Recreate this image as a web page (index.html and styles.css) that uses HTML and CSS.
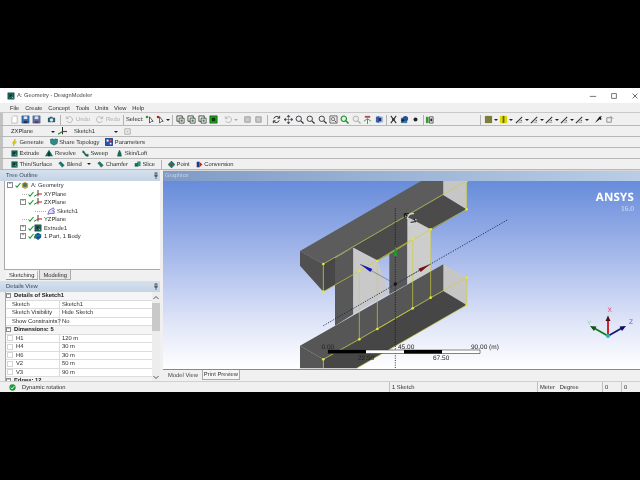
FILE: index.html
```html
<!DOCTYPE html>
<html lang="en">
<head>
<meta charset="utf-8">
<title>A: Geometry - DesignModeler</title>
<link rel="stylesheet" href="styles.css">
</head>
<body>
<svg class="defs" width="0" height="0" aria-hidden="true">
  <symbol id="doc" viewBox="0 0 10 10"><path d="M2 9V3l2-2h4v8z" fill="#fff" stroke="#bbb"/></symbol>
  <symbol id="save" viewBox="0 0 10 10"><path d="M1 1h8v8H1z" fill="#3b6db0" stroke="#244a80" stroke-width=".6"/><path d="M3 1.500h4v3H3z" fill="#dfe8f5"/><path d="M3 6.500h4V9H3z" fill="#23324a"/></symbol>
  <symbol id="saveas" viewBox="0 0 10 10"><path d="M1 1h8v8H1z" fill="#5a77a8" stroke="#3c527a" stroke-width=".6"/><path d="M3 1.500h4v3H3z" fill="#d8dee8"/><path d="M3 6.500h4V9H3z" fill="#7d2f5c"/></symbol>
  <symbol id="cam" viewBox="0 0 10 10"><path d="M1 3h8v5H1z" fill="#27586e"/><circle cx="5" cy="5.500" r="2" fill="#cfe9ee"/><path d="M3 2h3v1H3z" fill="#222"/></symbol>
  <symbol id="undo" viewBox="0 0 10 10"><path d="M2.500 3a3.300 3.300 0 1 1-.5 3.500M1.500 1.500V4H4" fill="none" stroke="#b4b4b4" stroke-width="1"/></symbol>
  <symbol id="redo" viewBox="0 0 10 10"><path d="M7.500 3a3.300 3.300 0 1 0 .5 3.500M8.500 1.500V4H6" fill="none" stroke="#b4b4b4" stroke-width="1"/></symbol>
  <symbol id="sel1" viewBox="0 0 10 10"><path d="M5 2v7l2-2 2 0z" fill="#fff" stroke="#222" stroke-width=".8"/><path d="M1 1h2.500v2.500H1z" fill="#3a8a3a"/></symbol>
  <symbol id="sel2" viewBox="0 0 10 10"><path d="M4 2v7l2-2 2 0z" fill="#fff" stroke="#222" stroke-width=".8"/><path d="M1 1h2.500v2.500H1z" fill="#b02020"/></symbol>
  <symbol id="fa" viewBox="0 0 10 10"><path d="M1 1h6v6H1z" fill="#e6efe6" stroke="#222" stroke-width=".8"/><path d="M3.500 3.500H9V9H3.500z" fill="#fff" stroke="#222" stroke-width=".8"/><path d="M5 5h2.500v2.500H5z" fill="#3b8a3b"/></symbol>
  <symbol id="fg" viewBox="0 0 10 10"><path d="M1 1h8v8H1z" fill="#23a523" stroke="#0e500e" stroke-width=".8"/><path d="M3 3h4v4H3z" fill="#0b3a0b"/></symbol>
  <symbol id="gr" viewBox="0 0 10 10"><path d="M2 2h6v6H2z" fill="#c9c9c9" stroke="#9a9a9a"/></symbol>
  <symbol id="rot" viewBox="0 0 10 10"><path d="M2 4a3.400 3.400 0 0 1 6-1M8 6a3.400 3.400 0 0 1-6 1M8.500 1v2.500H6M1.500 9V6.500H4" fill="none" stroke="#222" stroke-width="1"/></symbol>
  <symbol id="pan" viewBox="0 0 10 10"><path d="M5 0l1.500 2h-3zM5 10L3.500 8h3zM0 5l2-1.500v3zM10 5L8 3.500v3zM5 2v6M2 5h6" fill="#333" stroke="#333" stroke-width=".5"/></symbol>
  <symbol id="zoom" viewBox="0 0 10 10"><circle cx="4.200" cy="4.200" r="3" fill="#e6eef6" stroke="#333"/><path d="M6.500 6.500L9.500 9.500" stroke="#333" stroke-width="1.400"/></symbol>
  <symbol id="zoomg" viewBox="0 0 10 10"><circle cx="4.200" cy="4.200" r="3" fill="#d8f0d8" stroke="#1d8a2d" stroke-width="1.200"/><path d="M6.500 6.500L9.500 9.500" stroke="#1d8a2d" stroke-width="1.600"/></symbol>
  <symbol id="zoomf" viewBox="0 0 10 10"><circle cx="4.200" cy="4.200" r="3" fill="#eee" stroke="#aaa"/><path d="M6.500 6.500L9.500 9.500" stroke="#aaa" stroke-width="1.400"/></symbol>
  <symbol id="zbox" viewBox="0 0 10 10"><path d="M1 1h8v8H1z" fill="#e8e8e8" stroke="#444" stroke-width=".8"/><circle cx="4.500" cy="4.500" r="1.800" fill="none" stroke="#444" stroke-width=".7"/><path d="M6 6l2 2" stroke="#444"/></symbol>
  <symbol id="iso" viewBox="0 0 10 10"><path d="M5 4v6M1 7l4-3 4 3" fill="none" stroke="#2a9a50" stroke-width="1"/><path d="M2 1h6v2H2z" fill="#b04a4a"/></symbol>
  <symbol id="views" viewBox="0 0 10 10"><path d="M1 2l4-1v8l-4-1z" fill="#3a5fa8"/><path d="M5 1l4 1v6l-4 1z" fill="#a9bbd8"/><path d="M4 3h3v4H4z" fill="#1d2f66"/></symbol>
  <symbol id="scis" viewBox="0 0 10 10"><path d="M2 1l6 8M8 1L2 9" stroke="#333" stroke-width="1.200"/><circle cx="5" cy="5" r="1.500" fill="#333"/></symbol>
  <symbol id="shade" viewBox="0 0 10 10"><path d="M1 3h7v6H1z" fill="#3d7f9f"/><circle cx="6" cy="4" r="3" fill="#2b4f9a"/><circle cx="3" cy="6" r="1.500" fill="#222"/></symbol>
  <symbol id="dot" viewBox="0 0 10 10"><circle cx="5" cy="5" r="2.200" fill="#222"/></symbol>
  <symbol id="lay" viewBox="0 0 10 10"><path d="M1 2h3v7H1z" fill="#3a9a3a"/><path d="M5 2h4v7H5z" fill="#eee" stroke="#222" stroke-width=".7"/><path d="M6 4h2v3H6z" fill="#222"/></symbol>
  <symbol id="ol" viewBox="0 0 10 10"><path d="M1 1h8v8H1z" fill="#7b7d3c"/></symbol>
  <symbol id="yl" viewBox="0 0 10 10"><path d="M1 1h8v8H1z" fill="#dcd80a"/><path d="M4 1h2v8H4z" fill="#6a6a10"/></symbol>
  <symbol id="ln" viewBox="0 0 10 10"><path d="M1 9L8 2" stroke="#333" stroke-width="1.200"/><path d="M4 8h4" stroke="#8a8a8a"/><circle cx="7" cy="6" r=".8" fill="#555"/></symbol>
  <symbol id="pin" viewBox="0 0 10 10"><path d="M1 9l5-4 3-4-3 1-3 4z" fill="#111"/><path d="M6 3l2 2" stroke="#111" stroke-width="1.500"/></symbol>
  <symbol id="sq" viewBox="0 0 10 10"><path d="M2 3h5v5H2z" fill="none" stroke="#888"/><path d="M6 1l3 3" stroke="#888"/></symbol>
  <symbol id="axes" viewBox="0 0 10 10"><path d="M5 0v8" stroke="#222" stroke-width="1.100"/><path d="M5 5h5" stroke="#d01818" stroke-width="1.300"/><path d="M5 5L0 8" stroke="#1e8a2a" stroke-width="1.200"/></symbol>
  <symbol id="skg" viewBox="0 0 10 10"><path d="M2 2h6v6H2z" fill="none" stroke="#aaa"/><path d="M4 4h2v2H4z" fill="#bbb"/></symbol>
  <symbol id="bolt" viewBox="0 0 10 10"><path d="M6 0L2 6h2.500L3 10l5-6H5.500z" fill="#f0d000" stroke="#7a6a00" stroke-width=".4"/></symbol>
  <symbol id="share" viewBox="0 0 10 10"><path d="M0 2l3-1 2 1 2-1 3 1-1 5-4 2-4-2z" fill="#2b8a8a" stroke="#12494f" stroke-width=".5"/></symbol>
  <symbol id="param" viewBox="0 0 10 10"><path d="M.5.500h9v9h-9z" fill="#2750b0" stroke="#15306e"/><path d="M2 2h2.500v2.500H2z" fill="#fff"/><path d="M6 6h2v2H6z" fill="#fff"/><path d="M6 2h2v2H6z" fill="#e05050"/></symbol>
  <symbol id="ext" viewBox="0 0 10 10"><path d="M1 1h8v8H1z" fill="#136a5a" stroke="#0a3c34" stroke-width=".6"/><path d="M3 3h3v3H3z" fill="#2a2a2a"/><path d="M6 6l2 2" stroke="#9adfd0"/></symbol>
  <symbol id="rev" viewBox="0 0 10 10"><path d="M0 9l3-5 2-3 2 3 3 5z" fill="#136a5a"/><path d="M4 4h2v5H4z" fill="#0a3030"/></symbol>
  <symbol id="swp" viewBox="0 0 10 10"><path d="M1 1c4 0 2 6 8 5v3C3 10 4 4 1 4z" fill="#136a5a" stroke="#0a3c34" stroke-width=".4"/></symbol>
  <symbol id="skin" viewBox="0 0 10 10"><path d="M5 0l2 4 1 5H2l1-5z" fill="#136a5a" stroke="#0a3c34" stroke-width=".4"/></symbol>
  <symbol id="bln" viewBox="0 0 10 10"><path d="M1 3l3-2 5 5-3 3z" fill="#1a7a70" stroke="#0a3c34" stroke-width=".5"/></symbol>
  <symbol id="slc" viewBox="0 0 10 10"><path d="M1 3h5v5H1z" fill="#136a5a"/><path d="M5 1h4v6H5z" fill="#2a9a88" stroke="#0a3c34" stroke-width=".4"/></symbol>
  <symbol id="pt" viewBox="0 0 10 10"><path d="M5 0l5 5-5 5-5-5z" fill="#1a7a70" stroke="#0a3c34" stroke-width=".5"/><circle cx="5" cy="5" r="1.400" fill="#c22"/></symbol>
  <symbol id="cnv" viewBox="0 0 10 10"><path d="M1 1h4v8H1z" fill="#22368e"/><path d="M5 1l4 4-4 4z" fill="#c81e1e"/></symbol>
  <symbol id="geo" viewBox="0 0 10 10"><path d="M1 3l4-2 4 2v5l-4 2-4-2z" fill="#c4a84a"/><path d="M3 3h4v4H3z" fill="#1c4f8a"/><circle cx="5" cy="5" r="1.200" fill="#3a9a3a"/></symbol>
  <symbol id="chk" viewBox="0 0 6 6"><path d="M.5 3.500L2 5.200 5.500 1" fill="none" stroke="#1f9a2f" stroke-width="1.100"/></symbol>
  <symbol id="sk" viewBox="0 0 10 10"><path d="M1 9l2-5 5-3 1 2-2 2h2v3H5z" fill="#e8e2f8" stroke="#6a4ec8"/></symbol>
  <symbol id="bdy" viewBox="0 0 10 10"><path d="M1 3l4-2 4 2v4l-4 3-4-3z" fill="#1a4f9a"/><path d="M1 3l4 2 4-2" fill="none" stroke="#12a0a0"/><path d="M0 5h3v3H0z" fill="#2a8a3a"/></symbol>
  <symbol id="tack" viewBox="0 0 6 8"><path d="M1.500 1h3M2 1v3.500h2V1M1 4.500h4M3 4.500V8" fill="none" stroke="#333" stroke-width=".8"/></symbol>
</svg>

<div class="app">
  <header class="titlebar">
    <svg class="appicon"><use href="#ext"/></svg>
    <span class="title">A: Geometry - DesignModeler</span>
    <span class="winbtns">
      <svg class="winbtn" viewBox="0 0 10 10"><path d="M1 5.500h8" stroke="#555"/></svg>
      <svg class="winbtn" viewBox="0 0 10 10"><path d="M2 2h6v6H2z" fill="none" stroke="#555"/></svg>
      <svg class="winbtn" viewBox="0 0 10 10"><path d="M2 2l6 6M8 2l-6 6" stroke="#444"/></svg>
    </span>
  </header>

  <nav class="menu">
    <span>File</span><span>Create</span><span>Concept</span><span>Tools</span><span>Units</span><span>View</span><span>Help</span>
  </nav>

  <div class="bar bar-main">
    <svg class="i"><use href="#doc"/></svg><svg class="i"><use href="#save"/></svg><svg class="i"><use href="#saveas"/></svg>
    <i class="gap4"></i><svg class="i"><use href="#cam"/></svg><b class="sep"></b>
    <svg class="i"><use href="#undo"/></svg><span class="dim">Undo</span><i class="gap4"></i>
    <svg class="i"><use href="#redo"/></svg><span class="dim">Redo</span><b class="sep sep-w"></b>
    <span class="sel">Select:</span>
    <svg class="i"><use href="#sel1"/></svg><svg class="i"><use href="#sel2"/></svg><em class="arr"></em><b class="sep sep-a"></b>
    <svg class="i"><use href="#fa"/></svg><svg class="i"><use href="#fa"/></svg><svg class="i"><use href="#fa"/></svg><svg class="i"><use href="#fg"/></svg>
    <i class="gap4"></i><svg class="i"><use href="#undo"/></svg><em class="arr arr-dim"></em><i class="gap4"></i>
    <svg class="i"><use href="#gr"/></svg><svg class="i"><use href="#gr"/></svg><b class="sep"></b>
    <svg class="i iw"><use href="#rot"/></svg><svg class="i iw"><use href="#pan"/></svg><svg class="i iw"><use href="#zoom"/></svg><svg class="i iw"><use href="#zoom"/></svg><svg class="i iw"><use href="#zoom"/></svg><svg class="i iw"><use href="#zbox"/></svg><svg class="i iw"><use href="#zoomg"/></svg><svg class="i iw"><use href="#zoomf"/></svg><svg class="i iw"><use href="#iso"/></svg><svg class="i iw"><use href="#views"/></svg><b class="sep sep-b"></b>
    <svg class="i"><use href="#scis"/></svg><svg class="i"><use href="#shade"/></svg><svg class="i"><use href="#dot"/></svg><b class="sep sep-c"></b>
    <svg class="i"><use href="#lay"/></svg>
    <b class="sep sep-far"></b>
    <svg class="i"><use href="#ol"/></svg><em class="arr"></em><svg class="i"><use href="#yl"/></svg><em class="arr"></em><i class="gap1"></i>
    <svg class="i"><use href="#ln"/></svg><em class="arr"></em><svg class="i"><use href="#ln"/></svg><em class="arr"></em><svg class="i"><use href="#ln"/></svg><em class="arr"></em><svg class="i"><use href="#ln"/></svg><em class="arr"></em><svg class="i"><use href="#ln"/></svg><em class="arr"></em><i class="gap4"></i>
    <svg class="i"><use href="#pin"/></svg><svg class="i"><use href="#sq"/></svg>
  </div>

  <div class="bar bar-plane">
    <span class="combo combo-a">ZXPlane<em class="arr"></em></span>
    <svg class="i"><use href="#axes"/></svg>
    <span class="combo combo-b">Sketch1<em class="arr"></em></span>
    <svg class="i"><use href="#skg"/></svg>
  </div>

  <div class="bar bar-rib">
    <span class="cmd"><svg class="ic"><use href="#bolt"/></svg>Generate</span>
    <span class="cmd"><svg class="ic ic-w"><use href="#share"/></svg>Share Topology</span>
    <span class="cmd"><svg class="ic ic-w"><use href="#param"/></svg>Parameters</span>
  </div>
  <div class="bar bar-rib">
    <span class="cmd"><svg class="ic"><use href="#ext"/></svg>Extrude</span>
    <span class="cmd"><svg class="ic ic-w"><use href="#rev"/></svg>Revolve</span>
    <span class="cmd"><svg class="ic"><use href="#swp"/></svg>Sweep</span>
    <span class="cmd cmd-skin"><svg class="ic"><use href="#skin"/></svg>Skin/Loft</span>
  </div>
  <div class="bar bar-rib">
    <span class="cmd"><svg class="ic"><use href="#ext"/></svg>Thin/Surface</span>
    <span class="cmd"><svg class="ic"><use href="#bln"/></svg>Blend<em class="arr arr-blend"></em></span>
    <span class="cmd"><svg class="ic"><use href="#bln"/></svg>Chamfer</span>
    <span class="cmd"><svg class="ic"><use href="#slc"/></svg>Slice</span>
    <b class="sep sep-rib"></b>
    <span class="cmd"><svg class="ic"><use href="#pt"/></svg>Point</span>
    <span class="cmd"><svg class="ic"><use href="#cnv"/></svg>Conversion</span>
  </div>

  <main class="main">
    <aside class="left">
      <section class="tree">
        <div class="phead"><span>Tree Outline</span><svg class="tack"><use href="#tack"/></svg></div>
        <div class="treebody">
          <div class="node lv0"><u class="box">−</u><svg class="chk"><use href="#chk"/></svg><svg class="nic"><use href="#geo"/></svg>A: Geometry</div>
          <div class="node lv1 ln"><svg class="chk"><use href="#chk"/></svg><svg class="nic"><use href="#axes"/></svg>XYPlane</div>
          <div class="node lv1"><u class="box">−</u><svg class="chk"><use href="#chk"/></svg><svg class="nic"><use href="#axes"/></svg>ZXPlane</div>
          <div class="node lv2"><svg class="nic"><use href="#sk"/></svg>Sketch1</div>
          <div class="node lv1 ln"><svg class="chk"><use href="#chk"/></svg><svg class="nic"><use href="#axes"/></svg>YZPlane</div>
          <div class="node lv1"><u class="box">+</u><svg class="chk"><use href="#chk"/></svg><svg class="nic"><use href="#ext"/></svg>Extrude1</div>
          <div class="node lv1"><u class="box">+</u><svg class="chk"><use href="#chk"/></svg><svg class="nic"><use href="#bdy"/></svg>1 Part, 1 Body</div>
        </div>
        <div class="tabs">
          <span class="tab">Sketching</span><span class="tab tab-on">Modeling</span>
        </div>
      </section>
      <section class="details">
        <div class="phead"><span>Details View</span><svg class="tack"><use href="#tack"/></svg></div>
        <div class="dbody">
          <div class="dtable">
            <div class="drow dsec"><u class="box">−</u>Details of Sketch1</div>
            <div class="drow"><span class="k">Sketch</span><span class="v">Sketch1</span></div>
            <div class="drow"><span class="k">Sketch Visibility</span><span class="v">Hide Sketch</span></div>
            <div class="drow"><span class="k">Show Constraints?</span><span class="v">No</span></div>
            <div class="drow dsec"><u class="box">−</u>Dimensions: 5</div>
            <div class="drow"><span class="k k-d"><u class="cb"></u>H1</span><span class="v">120 m</span></div>
            <div class="drow"><span class="k k-d"><u class="cb"></u>H4</span><span class="v">30 m</span></div>
            <div class="drow"><span class="k k-d"><u class="cb"></u>H6</span><span class="v">30 m</span></div>
            <div class="drow"><span class="k k-d"><u class="cb"></u>V2</span><span class="v">50 m</span></div>
            <div class="drow"><span class="k k-d"><u class="cb"></u>V3</span><span class="v">90 m</span></div>
            <div class="drow dsec"><u class="box">−</u>Edges: 12</div>
          </div>
          <div class="sbar">
            <svg class="sarr" viewBox="0 0 8 8"><path d="M1.500 5L4 2.500 6.500 5" fill="none" stroke="#555"/></svg>
            <div class="thumb"></div>
            <svg class="sarr sarr-d" viewBox="0 0 8 8"><path d="M1.500 3L4 5.500 6.500 3" fill="none" stroke="#555"/></svg>
          </div>
        </div>
      </section>
    </aside>

    <section class="gfx">
      <div class="ghead">Graphics</div>
      <div class="canvas">
        <svg class="scene" viewBox="163 181 477 189">
          <g transform="translate(290 175) scale(.33333)">
            <path d="M30 228L395 17H460V60L100 267Z" fill="#5c5c5c"/>
            <path d="M100 267L460 60 530 103 262 258 190 218Z" fill="#4b4b4b"/>
            <path d="M30 228L100 267V350L30 272Z" fill="#505050"/>
            <path d="M100 267L135 247V330L100 350Z" fill="#474747"/>
            <path d="M135 250L190 218V418L135 452Z" fill="#585858"/>
            <path d="M298 238L352 205V328L298 358Z" fill="#585858"/>
            <path d="M190 218L262 256 298 354 190 418Z" fill="#c9c9c9"/>
            <path d="M352 125L422 163V290L352 328Z" fill="#cdcdcd"/>
            <path d="M460 17H530V103L460 60Z" fill="#c6c6c6"/>
            <path d="M460 268L530 308V390L460 348Z" fill="#c6c6c6"/>
            <path d="M30 512L460 268V348L100 553Z" fill="#565656"/>
            <path d="M100 553L460 348 530 390 200 580H100Z" fill="#464646"/>
            <path d="M30 512L100 553V580H30Z" fill="#565656"/>
            <g fill="none" stroke="#cfcf3a" stroke-width="2">
              <path d="M100 267L530 17V103L422 163V368L530 308V390L200 580"/>
              <path d="M100 267V350L208 288V493L100 553V580"/>
              <path d="M208 288L368 192V400L208 493"/>
              <path d="M262 258L422 163M262 258V462L422 368"/>
            </g>
            <g fill="#e6e63a">
              <circle cx="100" cy="267" r="4"/><circle cx="100" cy="350" r="4"/><circle cx="530" cy="17" r="4"/><circle cx="530" cy="103" r="4"/><circle cx="422" cy="163" r="4"/><circle cx="262" cy="258" r="4"/><circle cx="208" cy="288" r="4"/><circle cx="368" cy="192" r="4"/><circle cx="262" cy="462" r="4"/><circle cx="422" cy="368" r="4"/><circle cx="208" cy="493" r="4"/><circle cx="368" cy="400" r="4"/><circle cx="100" cy="553" r="4"/><circle cx="530" cy="308" r="4"/><circle cx="530" cy="390" r="4"/>
            </g>
            <path d="M316 100V580" stroke="#111" stroke-width="2.500" stroke-dasharray="3 4" fill="none"/>
            <path d="M100 452L655 133" stroke="#15204a" stroke-width="2.500" stroke-dasharray="4 4" fill="none"/>
            <path d="M210 268L316 327 420 268" stroke="#44506a" stroke-width="1.500" fill="none"/>
            <path d="M210 267L247 282 241 291Z" fill="#1414b4"/>
            <path d="M420 268L392 291 385 281Z" fill="#7a1010"/>
            <path d="M316 210L322 243H311Z" fill="#16a02a"/>
            <circle cx="316" cy="327" r="5" fill="#111"/>
            <path d="M345 118L358 128M343 128V116H356" fill="none" stroke="#111" stroke-width="3"/>
            <path d="M352 132A16 16 0 0 1 372 116M378 132A16 16 0 0 1 356 146" fill="none" stroke="#d8d8d8" stroke-width="4"/>
            <path d="M362 142L378 140 372 132" fill="none" stroke="#111" stroke-width="3"/>
          </g>
          <path d="M328 350H480V353.500H328Z" fill="#fff" stroke="#333" stroke-width=".6"/>
          <path d="M328 350H366V353.500H328ZM404 350H442V353.500H404Z" fill="#000"/>
          <g class="sc-t">
            <text x="321.500" y="349">0.00</text><text x="398" y="349">45.00</text><text x="471" y="349">90.00 (m)</text>
            <text x="358" y="360">22.50</text><text x="433" y="360">67.50</text>
          </g>
          <g fill="none" stroke-width="1.800">
            <path d="M608 336V320" stroke="#c81018"/><path d="M608 336L594 328" stroke="#117a1a"/><path d="M608 336L622 328" stroke="#14147a"/>
          </g>
          <path d="M608 315.500L610.500 321H605.500Z" fill="#5a0a10"/><path d="M590 326L596.500 326.500 594 331Z" fill="#0f5414"/><path d="M626 326L622 331 619.500 326.500Z" fill="#0c0c5c"/>
          <circle cx="608" cy="336" r="2" fill="#28b8c0"/>
          <text class="tr tr-x" x="607.500" y="312">X</text><text class="tr tr-y" x="587" y="325">Y</text><text class="tr tr-z" x="629" y="324">Z</text>
        </svg>
        <div class="brand"><div class="ansys">ANSYS</div><div class="ver">16.0</div></div>
      </div>
      <div class="gtabs"><span class="gtab">Model View</span><span class="gtab gtab-on">Print Preview</span></div>
    </section>
  </main>

  <footer class="status">
    <svg class="okic" viewBox="0 0 10 10"><circle cx="5" cy="5" r="4.500" fill="#1f9a3a"/><path d="M2.500 5.200L4.300 7 7.500 3.200" fill="none" stroke="#fff" stroke-width="1.300"/></svg>
    <span class="st-main">Dynamic rotation</span>
    <span class="st st-sk">1 Sketch</span>
    <span class="st st-unit">Meter&nbsp;&nbsp; Degree</span>
    <span class="st st-z">0</span>
    <span class="st st-z">0</span>
  </footer>
</div>
</body>
</html>
```

FILE: styles.css
```css
* { box-sizing: border-box; }
html, body { margin: 0; height: 100%; background: #000; overflow: hidden; }
.defs { position: absolute; }
body { font: 5.800px/1 "Liberation Sans", Arial, sans-serif; color: #2c2c2c; white-space: nowrap; text-rendering: geometricPrecision; }
svg { display: block; flex: none; }
.app { margin-top: 88px; width: 640px; height: 304px; background: #f0f0f0; display: flex; flex-direction: column; overflow: hidden; filter: blur(.35px); }

.titlebar { height: 15px; background: #fff; display: flex; align-items: center; padding-left: 7px; }
.appicon { width: 8px; height: 8px; }
.title { margin-left: 2px; padding-top: 2px; font-size: 5.700px; color: #444; }
.winbtns { margin-left: auto; display: flex; gap: 13px; padding-right: 1px; }
.winbtn { width: 8px; height: 8px; }

.menu { height: 10px; display: flex; align-items: center; gap: 5.800px; padding: 4px 0 0 10px; border-bottom: 1px solid #c8c8c8; }

.bar { display: flex; align-items: center; border-bottom: 1px solid #b8b8b8; position: relative; padding-top: 1px; }
.bar::before { content: ""; position: absolute; left: 0; top: 0; bottom: 0; width: 3px; background: #c2c2c2; }
.bar-main { height: 13px; padding-left: 9px; }
.bar-plane { height: 11px; padding-left: 9px; }
.bar-rib { height: 11px; padding-left: 11px; gap: 6px; }
.i { width: 9px; height: 9px; margin: 0 1px; }
.iw { margin: 0 1.200px; }
.gap4 { width: 4px; flex: none; }
.gap1 { width: 1px; flex: none; }
.sep { width: 1px; height: 10px; background: #b4b4b4; margin: 0 3px; flex: none; }
.sep-w { margin: 0 2px 0 3px; }
.sep-a { margin: 0 2px; }
.sep-b { margin: 0 1.500px 0 1px; }
.sep-c { margin: 0 0 0 2px; }
.sep-far { margin: 0 2px 0 45px; }
.sep-rib { margin: 0; }
.dim { color: #aaa; margin-left: 1px; padding-top: 3px; width: 14px; flex: none; }
.sel { width: 18px; padding-top: 3px; flex: none; color: #222; }
.arr { display: inline-block; width: 0; height: 0; border: 2px solid transparent; border-top: 2.500px solid #222; border-bottom: 0; flex: none; }
.arr-dim { border-top-color: #aaa; }
.arr-blend { margin-left: 4px; }

.combo { display: flex; align-items: center; justify-content: space-between; height: 9px; padding: 3px 2px 0; }
.combo .arr { margin-top: -3px; }
.combo-a { width: 48px; }
.combo-b { width: 48px; margin-left: 4px; margin-right: 2px; }

.cmd { display: flex; align-items: center; gap: 1.500px; padding-top: 3px; }
.cmd .arr { margin-top: -3px; }
.cmd-skin { margin-left: 2px; }
.ic { width: 7px; height: 7px; margin-top: -3px; }
.ic-w { width: 8px; height: 8px; }

.main { height: 211px; display: flex; }
.left { width: 160px; display: flex; flex-direction: column; background: #f0f0f0; flex: none; }
.phead { height: 11px; background: linear-gradient(#d5e1ee, #c4d3e6); display: flex; align-items: center; justify-content: space-between; padding: 3px 1px 0 6px; flex: none; color: #3a4658; }
.tack { width: 6px; height: 7px; margin-top: -3px; }
.tree { height: 110px; display: flex; flex-direction: column; padding-left: 4px; }
.tree .phead { margin-left: -4px; }
.treebody { height: 89px; background: #fff; border-left: 1px solid #a8a8a8; border-bottom: 1px solid #a8a8a8; flex: none; }
.node { height: 8.500px; display: flex; align-items: center; position: relative; padding-top: 4px; }
.node svg, .node .box { margin-top: -4px; }
.lv0 { padding-left: 2px; }
.lv1 { padding-left: 15px; }
.ln { padding-left: 23px; }
.ln::before { content: ""; position: absolute; left: 17px; width: 5px; top: 50%; border-top: 1px dotted #aaa; }
.lv2 { padding-left: 42px; }
.lv2::before { content: ""; position: absolute; left: 30px; width: 11px; top: 50%; border-top: 1px dotted #aaa; }
.box { width: 6px; height: 6px; border: 1px solid #8a8a8a; background: #fff; font-size: 5px; line-height: 3.500px; text-align: center; text-decoration: none; margin-right: 2px; flex: none; color: #333; }
.chk { width: 6px; height: 6px; }
.nic { width: 8px; height: 8px; margin-right: 2px; }
.tabs { height: 10px; display: flex; align-items: flex-end; padding-left: 2px; gap: 1px; }
.tab { height: 9px; padding: 3px 3px 0; border-bottom: 1px solid #999; border-right: 1px solid #bbb; background: #f4f4f4; }
.tab-on { background: #e6e6e6; border: 1px solid #aaa; border-top: 0; height: 10px; padding-top: 4px; }

.details { height: 101px; display: flex; flex-direction: column; overflow: hidden; padding-top: 1px; }
.dbody { display: flex; height: 90px; padding-left: 5px; }
.dtable { flex: 1; background: #fff; border-left: 1px solid #a8a8a8; }
.drow { height: 8.500px; display: flex; align-items: center; border-bottom: 1px solid #dcdcdc; padding-top: 3px; }
.dsec { font-weight: 700; color: #222; background: #f5f5f5; }
.dsec .box { margin: -3px 3px 0 0; width: 5px; height: 5px; font-weight: 400; line-height: 2.500px; }
.k { width: 54px; align-self: stretch; margin-top: -3px; padding: 3px 0 0 6px; display: flex; align-items: center; border-right: 1px solid #dcdcdc; flex: none; }
.k-d { padding-left: 1px; }
.v { padding-left: 2px; }
.cb { width: 6px; height: 6px; border: 1px solid #d5d5d5; margin: -3px 3px 0 0; background: #fff; flex: none; }
.sbar { width: 8px; background: #ededed; position: relative; flex: none; display: flex; flex-direction: column; }
.sarr { width: 8px; height: 8px; margin-top: 2px; }
.thumb { height: 28px; background: #c9c9c9; margin-top: 1px; flex: none; }
.sarr-d { margin-top: auto; margin-bottom: 1px; }

.gfx { flex: 1; display: flex; flex-direction: column; margin-left: 3px; min-width: 0; }
.ghead { height: 11px; background: linear-gradient(90deg, #7f9bc6, #b9cde6); color: #c7d4e8; padding: 2px 0 0 2px; display: flex; align-items: center; border-top: 1px solid #d8d8d8; flex: none; }
.canvas { height: 189px; position: relative; overflow: hidden; background: linear-gradient(#678cdb 0%, #a6b9ea 40%, #dfe5f8 75%, #fff 100%); border-bottom: 1px solid #888; flex: none; }
.scene { position: absolute; left: 0; top: 0; width: 477px; height: 189px; }
.sc-t text { font: 6.500px "Liberation Sans", sans-serif; fill: #222; }
.tr { font: 6.500px "Liberation Sans", sans-serif; }
.tr-x { fill: #e03a6a; }
.tr-y { fill: #8fd8a8; }
.tr-z { fill: #5a5ac8; }
.brand { position: absolute; right: 6px; top: 11px; text-align: right; color: #fff; }
.ansys { font: 700 11.500px/12px "Open Sans", sans-serif; letter-spacing: .2px; }
.ver { font: 7.500px/8px "Liberation Serif", serif; color: #d6e0f2; margin-top: 1px; }
.gtabs { height: 11px; display: flex; align-items: flex-start; padding-left: 4px; background: #f0f0f0; gap: 3px; }
.gtab { padding: 4px 1px 0; height: 9px; color: #444; }
.gtab-on { background: #f6f6f6; border: 1px solid #aaa; border-top: 0; height: 10px; color: #333; padding: 3px 1px 0; }

.status { height: 11px; display: flex; align-items: center; border-top: 1px solid #d0d0d0; padding-left: 9px; }
.okic { width: 7px; height: 7px; }
.st-main { margin-left: 6px; padding-top: 3px; width: 367px; flex: none; }
.st { height: 100%; border-left: 1px solid #c0c0c0; display: flex; align-items: center; padding: 3px 0 0 2px; flex: none; }
.st-sk { width: 148px; }
.st-unit { width: 65px; }
.st-z { width: 19px; }
```
